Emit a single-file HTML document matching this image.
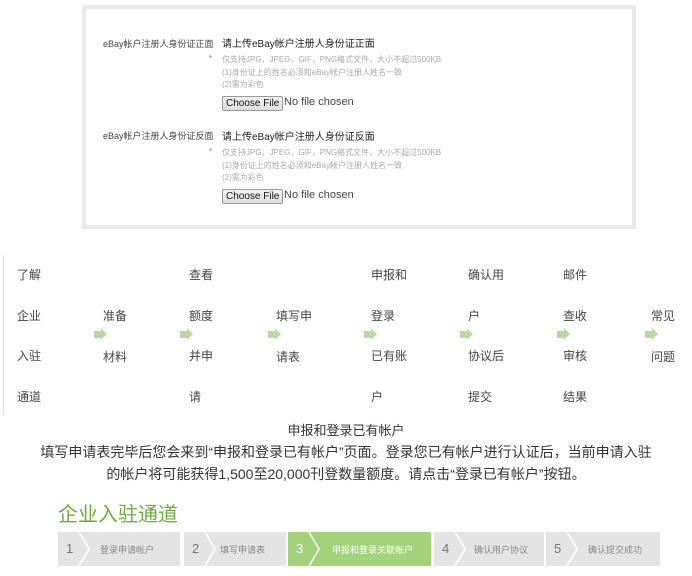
<!DOCTYPE html>
<html><head><meta charset="utf-8"><style>
body{margin:0;width:692px;height:576px;background:#fff;font-family:"Liberation Sans","Noto Sans CJK SC",sans-serif;position:relative;overflow:hidden;color:#333}
.a{position:absolute;white-space:nowrap}
.box{position:absolute;left:82px;top:5px;width:546px;height:216px;border:4px solid #e9e9e9}
.lb{font-size:9px;color:#444}
.tt{font-size:10px;color:#222}
.sm{font-size:8px;color:#aaa;line-height:12.5px}
.btn{font-size:10px;border:1px solid #999;background:linear-gradient(#f4f4f4,#ddd);padding:0 3px;height:13px;line-height:13px;border-radius:2px;color:#111}
.fc{font-size:11px;color:#444}
.f{font-size:12px;color:#444}
.ar{position:absolute;width:0;height:0}
.ar::before{content:"";position:absolute;left:0;top:-3px;width:7px;height:7px;background:#b9d8a4}
.ar::after{content:"";position:absolute;left:7px;top:-6px;border-left:6px solid #b9d8a4;border-top:6px solid transparent;border-bottom:6px solid transparent}
.st{position:absolute;top:532px;height:34px;background:#e4e4e4;font-size:9px;color:#888}
.st .n{position:absolute;left:8px;top:9px;font-size:13px;color:#777}
.st .t{position:absolute;top:11px}
.st svg{position:absolute;left:20px;top:0}
</style></head><body>
<div class="box"></div>
<div class="a lb" style="left:103px;top:37px">eBay帐户注册人身份证正面</div>
<div class="a tt" style="left:222px;top:35px">请上传eBay帐户注册人身份证正面</div>
<div class="a" style="left:209px;top:54px;color:#e55;font-size:8px">*</div>
<div class="a sm" style="left:222px;top:54px">仅支持JPG，JPEG，GIF，PNG格式文件，大小不超过500KB<br>(1)身份证上的姓名必须和eBay帐户注册人姓名一致<br>(2)需为彩色</div>
<div class="a btn" style="left:222px;top:96px">Choose File</div>
<div class="a fc" style="left:284px;top:96px">No file chosen</div>
<div class="a lb" style="left:103px;top:129px">eBay帐户注册人身份证反面</div>
<div class="a tt" style="left:222px;top:128px">请上传eBay帐户注册人身份证反面</div>
<div class="a" style="left:209px;top:147px;color:#e55;font-size:8px">*</div>
<div class="a sm" style="left:222px;top:147px">仅支持JPG，JPEG，GIF，PNG格式文件，大小不超过500KB<br>(1)身份证上的姓名必须和eBay帐户注册人姓名一致<br>(2)需为彩色</div>
<div class="a btn" style="left:222px;top:189px">Choose File</div>
<div class="a fc" style="left:284px;top:189px">No file chosen</div>

<div class="a" style="left:3px;top:255px;width:1px;height:160px;background:#ddd"></div>
<div class="a f" style="left:17px;top:255px;line-height:40.5px">了解<br>企业<br>入驻<br>通道</div>
<div class="a f" style="left:103px;top:296px;line-height:40.5px">准备<br>材料</div>
<div class="a f" style="left:189px;top:255px;line-height:40.5px">查看<br>额度<br>并申<br>请</div>
<div class="a f" style="left:276px;top:296px;line-height:40.5px">填写申<br>请表</div>
<div class="a f" style="left:371px;top:255px;line-height:40.5px">申报和<br>登录<br>已有账<br>户</div>
<div class="a f" style="left:468px;top:255px;line-height:40.5px">确认用<br>户<br>协议后<br>提交</div>
<div class="a f" style="left:563px;top:255px;line-height:40.5px">邮件<br>查收<br>审核<br>结果</div>
<div class="a f" style="left:651px;top:296px;line-height:40.5px">常见<br>问题</div>
<div class="ar" style="left:94px;top:334px"></div>
<div class="ar" style="left:180px;top:334px"></div>
<div class="ar" style="left:268px;top:334px"></div>
<div class="ar" style="left:364px;top:334px"></div>
<div class="ar" style="left:460px;top:334px"></div>
<div class="ar" style="left:557px;top:334px"></div>
<div class="ar" style="left:645px;top:334px"></div>

<div class="a" style="left:0;width:692px;text-align:center;top:420px;font-size:13px;color:#333">申报和登录已有帐户</div>
<div class="a" style="left:0;width:692px;text-align:center;top:441px;font-size:14px;line-height:22px;color:#333">填写申请表完毕后您会来到“申报和登录已有帐户”页面。登录您已有帐户进行认证后，当前申请入驻<br>的帐户将可能获得1,500至20,000刊登数量额度。请点击“登录已有帐户”按钮。</div>
<div class="a" style="left:58px;top:498px;font-size:20px;color:#6cae3e">企业入驻通道</div>

<div class="st" style="left:58px;width:122px"><span class="n">1</span><svg width="14" height="34"><path d="M1 0L11 17L1 34" fill="none" stroke="#fff" stroke-width="1.5"/></svg><span class="t" style="left:42px">登录申请帐户</span></div>
<div class="st" style="left:184px;width:102px"><span class="n">2</span><svg width="14" height="34"><path d="M1 0L11 17L1 34" fill="none" stroke="#fff" stroke-width="1.5"/></svg><span class="t" style="left:36px">填写申请表</span></div>
<div class="st" style="left:288px;width:143px;background:#a3d27a;color:#fff"><span class="n" style="color:#fff">3</span><svg width="14" height="34"><path d="M1 0L11 17L1 34" fill="none" stroke="#fff" stroke-width="1.5"/></svg><span class="t" style="left:44px">申报和登录关联帐户</span></div>
<div class="st" style="left:434px;width:110px"><span class="n">4</span><svg width="14" height="34"><path d="M1 0L11 17L1 34" fill="none" stroke="#fff" stroke-width="1.5"/></svg><span class="t" style="left:40px">确认用户协议</span></div>
<div class="st" style="left:546px;width:114px"><span class="n">5</span><svg width="14" height="34"><path d="M1 0L11 17L1 34" fill="none" stroke="#fff" stroke-width="1.5"/></svg><span class="t" style="left:42px">确认提交成功</span></div>
</body></html>
